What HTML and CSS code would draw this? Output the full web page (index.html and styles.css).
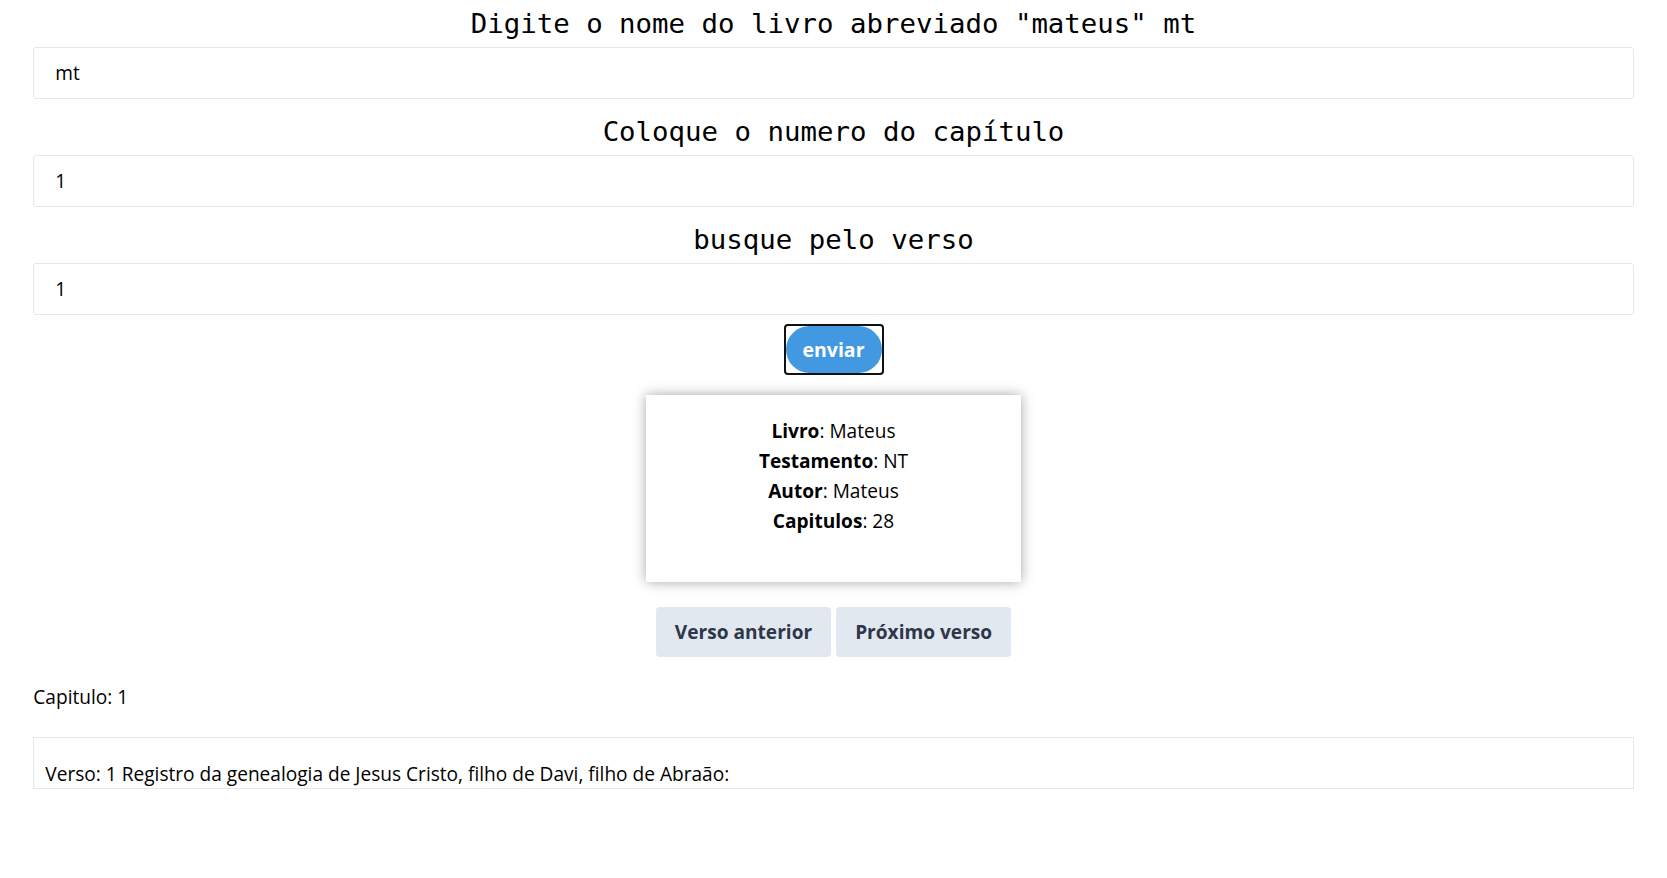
FILE: index.html
```html
<!DOCTYPE html>
<html lang="pt-BR">
<head>
<meta charset="utf-8">
<title>Bíblia</title>
<link rel="stylesheet" href="styles.css">
</head>
<body>
<div class="page">
  <form class="search">
    <div class="field">
      <h2 class="label">Digite o nome do livro abreviado "mateus" mt</h2>
      <input class="input" type="text" value="mt">
    </div>
    <div class="field">
      <h2 class="label">Coloque o numero do capítulo</h2>
      <input class="input" type="text" value="1">
    </div>
    <div class="field">
      <h2 class="label">busque pelo verso</h2>
      <input class="input" type="text" value="1">
    </div>
    <div class="submit-row">
      <span class="focus-ring"><button class="btn-send" type="button">enviar</button></span>
    </div>
  </form>

  <div class="card">
    <div class="card-line"><b>Livro</b>: Mateus</div>
    <div class="card-line"><b>Testamento</b>: NT</div>
    <div class="card-line"><b>Autor</b>: Mateus</div>
    <div class="card-line"><b>Capitulos</b>: 28</div>
  </div>

  <div class="nav">
    <button class="btn-nav" type="button">Verso anterior</button>
    <button class="btn-nav" type="button">Próximo verso</button>
  </div>

  <p class="chapter">Capitulo: 1</p>

  <div class="verse">
    <p class="verse-text">Verso: 1 Registro da genealogia de Jesus Cristo, filho de Davi, filho de Abraão:</p>
  </div>
</div>
</body>
</html>
```

FILE: styles.css
```css
* {
  box-sizing: border-box;
}

html, body {
  margin: 0;
  padding: 0;
  background: #ffffff;
}

body {
  font-family: "Open Sans", "Noto Sans", sans-serif;
  font-size: 19.1px;
  line-height: 30px;
  color: #000000;
}

.page {
  width: 96%;
  margin: 0 auto;
  padding-top: 6px;
}

.search {
  display: flex;
  flex-direction: column;
  margin: 0;
}

.field + .field {
  margin-top: 15px;
}

.label {
  margin: 0 0 5px 0;
  font-family: "DejaVu Sans Mono", "Liberation Mono", monospace;
  font-size: 27.4px;
  line-height: 36px;
  font-weight: normal;
  text-align: center;
  color: #000000;
}

.input {
  display: block;
  width: 100%;
  height: 52px;
  margin: 0;
  padding: 0 21px;
  border: 1px solid #e2e8f0;
  border-radius: 3px;
  background: #ffffff;
  font-family: "Open Sans", "Noto Sans", sans-serif;
  font-size: 19.1px;
  color: #000000;
  outline: none;
}

.submit-row {
  display: flex;
  justify-content: center;
  margin-top: 9px;
}

.focus-ring {
  display: inline-flex;
  border: 2px solid #111111;
  border-radius: 4px;
}

.btn-send {
  width: 96px;
  height: 47px;
  padding: 0;
  border: none;
  border-radius: 9999px;
  background: #4299e1;
  color: #ffffff;
  font-family: "Open Sans", "Noto Sans", sans-serif;
  font-size: 19.5px;
  font-weight: 700;
  cursor: pointer;
}

.card {
  width: 375px;
  margin: 20px auto 0;
  padding: 21px 0 46px;
  background: #ffffff;
  box-shadow: 0 0 12px rgba(0, 0, 0, 0.35);
  text-align: center;
}

.card-line b {
  font-weight: 700;
}

.nav {
  display: flex;
  justify-content: center;
  gap: 5px;
  margin-top: 25px;
}

.btn-nav {
  height: 50px;
  padding: 0 19px;
  border: none;
  border-radius: 4px;
  background: #e2e8f0;
  color: #2d3748;
  font-family: "Open Sans", "Noto Sans", sans-serif;
  font-size: 19.1px;
  font-weight: 700;
  cursor: pointer;
}

.chapter {
  margin: 25px 0 0;
}

.verse {
  height: 52px;
  margin-top: 25px;
  padding: 21px 11px 0;
  border: 1px solid #e2e8f0;
}

.verse-text {
  margin: 0;
  white-space: nowrap;
}
```
